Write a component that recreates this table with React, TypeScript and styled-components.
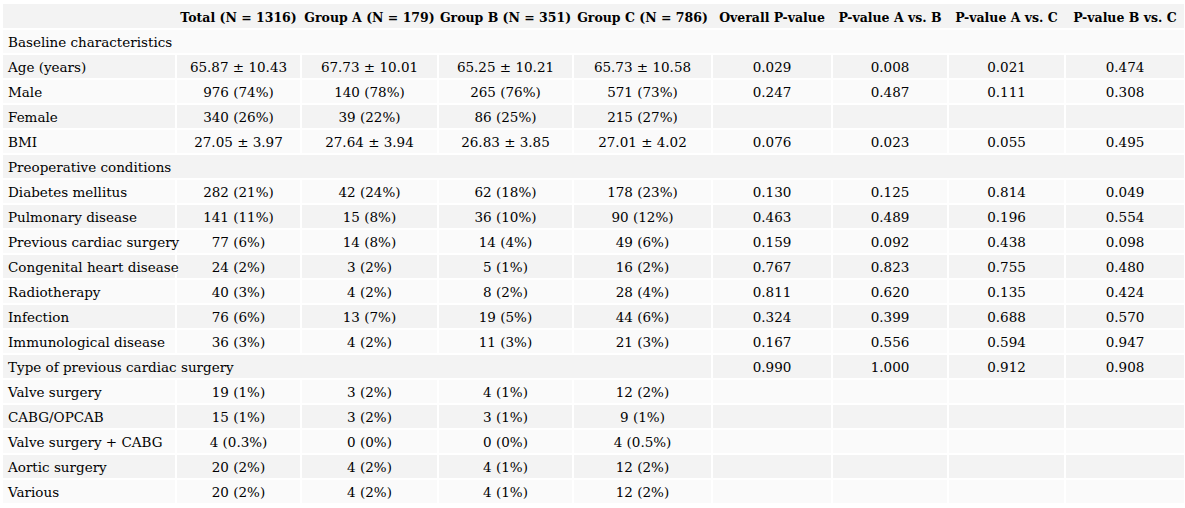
import React from "react";
import styled, { createGlobalStyle } from "styled-components";

const GlobalStyle = createGlobalStyle`
  html, body {
    margin: 0;
    padding: 0;
    background: #ffffff;
  }
  body {
    font-family: "DejaVu Serif", "Liberation Serif", serif;
    color: #000000;
  }
`;

const Page = styled.div`
  padding: 2px 0 0 1px;
  width: 1186px;
  overflow: hidden;
`;

const Table = styled.table`
  border-collapse: separate;
  border-spacing: 2px;
  table-layout: fixed;
  width: 1185px;
  font-size: 13.5px;
`;

const HeadCell = styled.th`
  background-color: #f3f3f3;
  box-shadow: 2px 0 0 #f3f3f3;
  font-size: 12.5px;
  font-weight: 700;
  text-align: center;
  white-space: nowrap;
  height: 24px;
  padding: 2px 0 0;
  box-sizing: border-box;
  &:last-child {
    box-shadow: none;
  }
`;

const Row = styled.tr<{ $shade: boolean }>`
  background-color: ${(p) => (p.$shade ? "#f3f3f3" : "#fafafa")};
`;

const LabelCell = styled.td`
  height: 23px;
  padding: 0 5px;
  text-align: left;
  white-space: nowrap;
`;

const ValueCell = styled.td`
  height: 23px;
  padding: 0;
  text-align: center;
  white-space: nowrap;
`;

const headers = [
  "",
  "Total (N = 1316)",
  "Group A (N = 179)",
  "Group B (N = 351)",
  "Group C (N = 786)",
  "Overall P-value",
  "P-value A vs. B",
  "P-value A vs. C",
  "P-value B vs. C",
];

const widths = [172, 123, 135, 133, 137, 118, 114, 115, 118];

type Line =
  | { kind: "section"; label: string; span: number; rest?: string[] }
  | { kind: "data"; label: string; values: string[] };

const lines: Line[] = [
  { kind: "section", label: "Baseline characteristics", span: 9 },
  { kind: "data", label: "Age (years)", values: ["65.87 ± 10.43", "67.73 ± 10.01", "65.25 ± 10.21", "65.73 ± 10.58", "0.029", "0.008", "0.021", "0.474"] },
  { kind: "data", label: "Male", values: ["976 (74%)", "140 (78%)", "265 (76%)", "571 (73%)", "0.247", "0.487", "0.111", "0.308"] },
  { kind: "data", label: "Female", values: ["340 (26%)", "39 (22%)", "86 (25%)", "215 (27%)", "", "", "", ""] },
  { kind: "data", label: "BMI", values: ["27.05 ± 3.97", "27.64 ± 3.94", "26.83 ± 3.85", "27.01 ± 4.02", "0.076", "0.023", "0.055", "0.495"] },
  { kind: "section", label: "Preoperative conditions", span: 9 },
  { kind: "data", label: "Diabetes mellitus", values: ["282 (21%)", "42 (24%)", "62 (18%)", "178 (23%)", "0.130", "0.125", "0.814", "0.049"] },
  { kind: "data", label: "Pulmonary disease", values: ["141 (11%)", "15 (8%)", "36 (10%)", "90 (12%)", "0.463", "0.489", "0.196", "0.554"] },
  { kind: "data", label: "Previous cardiac surgery", values: ["77 (6%)", "14 (8%)", "14 (4%)", "49 (6%)", "0.159", "0.092", "0.438", "0.098"] },
  { kind: "data", label: "Congenital heart disease", values: ["24 (2%)", "3 (2%)", "5 (1%)", "16 (2%)", "0.767", "0.823", "0.755", "0.480"] },
  { kind: "data", label: "Radiotherapy", values: ["40 (3%)", "4 (2%)", "8 (2%)", "28 (4%)", "0.811", "0.620", "0.135", "0.424"] },
  { kind: "data", label: "Infection", values: ["76 (6%)", "13 (7%)", "19 (5%)", "44 (6%)", "0.324", "0.399", "0.688", "0.570"] },
  { kind: "data", label: "Immunological disease", values: ["36 (3%)", "4 (2%)", "11 (3%)", "21 (3%)", "0.167", "0.556", "0.594", "0.947"] },
  { kind: "section", label: "Type of previous cardiac surgery", span: 5, rest: ["0.990", "1.000", "0.912", "0.908"] },
  { kind: "data", label: "Valve surgery", values: ["19 (1%)", "3 (2%)", "4 (1%)", "12 (2%)", "", "", "", ""] },
  { kind: "data", label: "CABG/OPCAB", values: ["15 (1%)", "3 (2%)", "3 (1%)", "9 (1%)", "", "", "", ""] },
  { kind: "data", label: "Valve surgery + CABG", values: ["4 (0.3%)", "0 (0%)", "0 (0%)", "4 (0.5%)", "", "", "", ""] },
  { kind: "data", label: "Aortic surgery", values: ["20 (2%)", "4 (2%)", "4 (1%)", "12 (2%)", "", "", "", ""] },
  { kind: "data", label: "Various", values: ["20 (2%)", "4 (2%)", "4 (1%)", "12 (2%)", "", "", "", ""] },
];

export default function App(): React.JSX.Element {
  return (
    <Page>
      <GlobalStyle />
      <Table>
        <colgroup>
          {widths.map((w, i) => (
            <col key={i} style={{ width: w }} />
          ))}
        </colgroup>
        <thead>
          <tr>
            {headers.map((h, i) => (
              <HeadCell key={i}>{h}</HeadCell>
            ))}
          </tr>
        </thead>
        <tbody>
          {lines.map((line, i) => (
            <Row key={i} $shade={i % 2 === 1}>
              {line.kind === "section" ? (
                <>
                  <LabelCell colSpan={line.span}>{line.label}</LabelCell>
                  {line.rest?.map((v, j) => (
                    <ValueCell key={j}>{v}</ValueCell>
                  ))}
                </>
              ) : (
                <>
                  <LabelCell>{line.label}</LabelCell>
                  {line.values.map((v, j) => (
                    <ValueCell key={j}>{v}</ValueCell>
                  ))}
                </>
              )}
            </Row>
          ))}
        </tbody>
      </Table>
    </Page>
  );
}
